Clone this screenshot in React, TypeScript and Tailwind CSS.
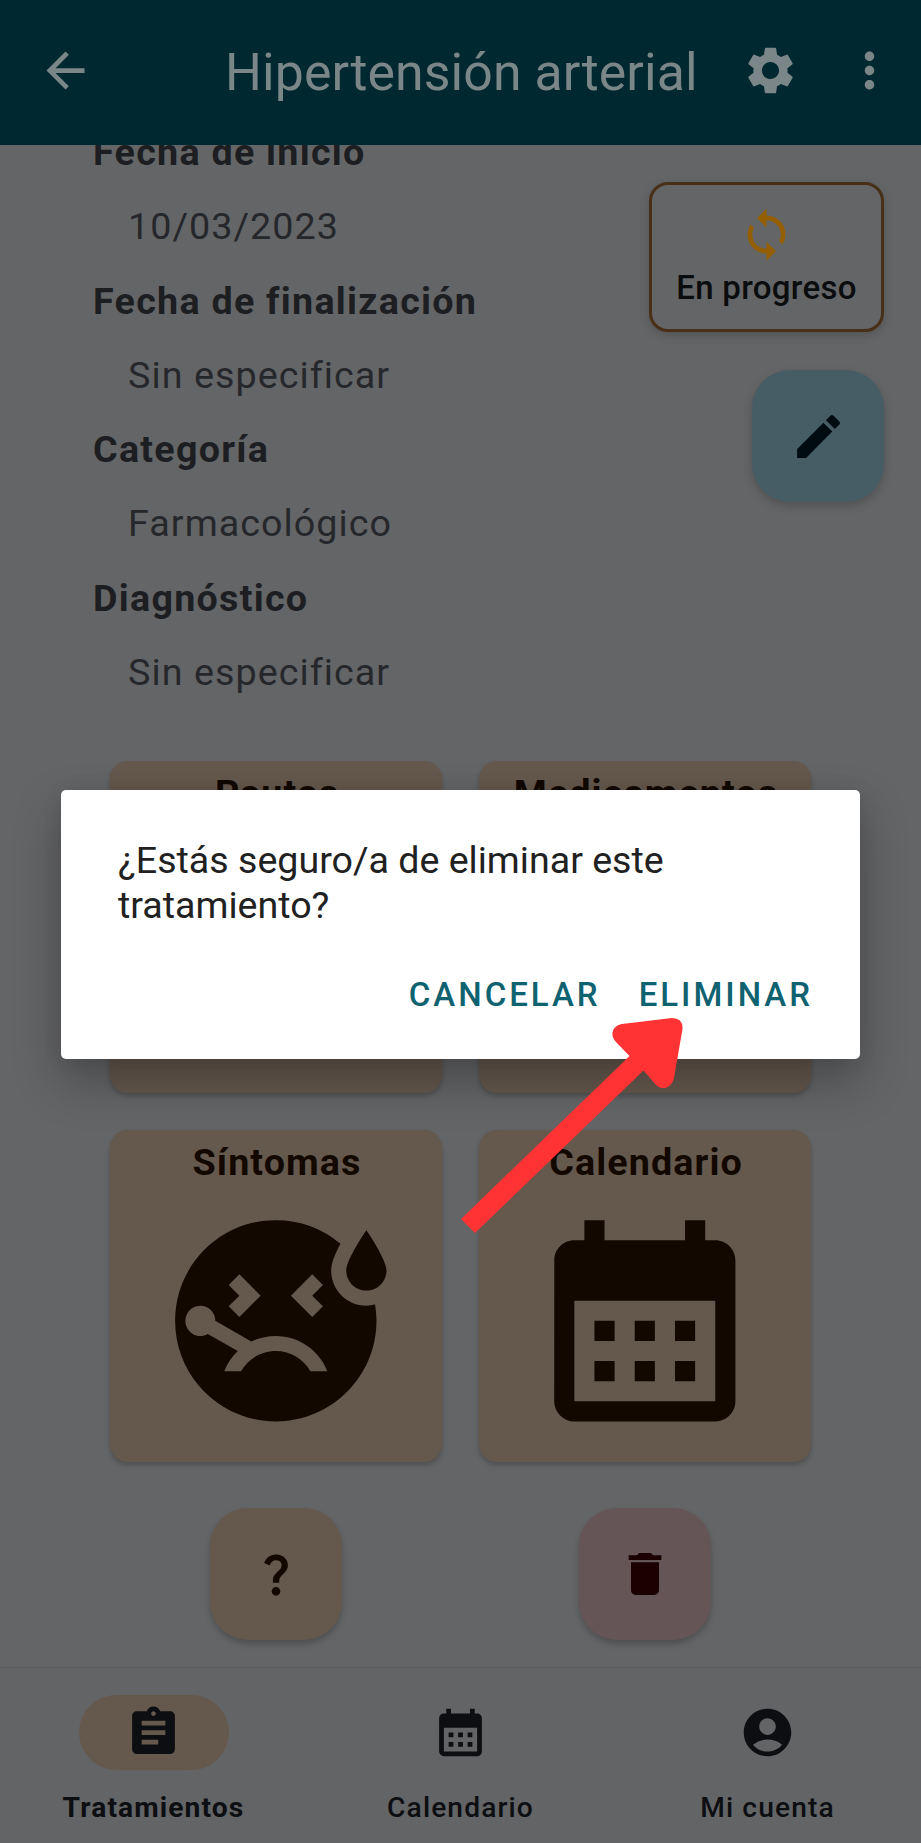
import type { ReactNode } from "react";
import {
  MdAccountCircle,
  MdArrowBack,
  MdAssignment,
  MdCalendarMonth,
  MdDelete,
  MdEdit,
  MdLoop,
  MdMoreVert,
  MdQuestionMark,
  MdSettings,
  MdSick,
} from "react-icons/md";

const details = [
  { label: "Fecha de inicio", value: "10/03/2023" },
  { label: "Fecha de finalización", value: "Sin especificar" },
  { label: "Categoría", value: "Farmacológico" },
  { label: "Diagnóstico", value: "Sin especificar" },
];

function Header() {
  return (
    <header className="flex h-[145px] shrink-0 items-center bg-[#002830] pb-1 text-[#7b8688]">
      <MdArrowBack className="ml-[37px] size-[57px]" />
      <h1 className="mt-[4px] ml-[131px] w-[478px] text-[51.8px] leading-none tracking-[0.1px] whitespace-nowrap">Hipertensión arterial</h1>
      <MdSettings className="ml-[39px] size-[57px]" />
      <MdMoreVert className="ml-[42px] size-[57px]" />
    </header>
  );
}

function Card({ title, children }: { title: string; children?: ReactNode }) {
  return (
    <article className="flex h-[332px] flex-col items-center rounded-[18px] bg-[#65584d] text-[#120800] shadow-[0_3px_5px_rgba(0,0,0,0.22)]">
      <h2 className="mt-[10px] pl-[2px] text-[37.7px] leading-[45px] font-bold tracking-[1.1px]">{title}</h2>
      <div className="mt-[15px]">{children}</div>
    </article>
  );
}

function NavItem({ label, active, children }: { label: string; active?: boolean; children: ReactNode }) {
  return (
    <div className={`flex flex-col items-center text-[#0d0e11] ${active ? "font-bold" : "font-medium"}`}>
      <div className={`mt-[27px] flex h-[75px] w-[150px] items-center justify-center rounded-full ${active ? "bg-[#65584d]" : ""}`}>
        {children}
      </div>
      <span className="mt-[21px] text-[28.2px] leading-[34px] tracking-[1.1px]">{label}</span>
    </div>
  );
}

function Dialog() {
  return (
    <div className="absolute top-[790px] left-[61px] flex h-[269px] w-[799px] flex-col rounded-[5px] bg-white shadow-[0_22px_48px_rgba(0,0,0,0.28),0_0_20px_rgba(0,0,0,0.08)]">
      <p className="mt-[48px] ml-[57px] w-[600px] text-[37.6px] leading-[44.5px] text-[#212121]">
        ¿Estás seguro/a de eliminar este tratamiento?
      </p>
      <div className="mt-[48px] mr-[47px] flex justify-end gap-[38px] text-[33px] leading-[40px] font-medium tracking-[3px] text-[#0f6270]">
        <button>CANCELAR</button>
        <button>ELIMINAR</button>
      </div>
    </div>
  );
}

export default function App() {
  return (
    <div className="relative flex h-[1843px] w-[921px] flex-col overflow-hidden bg-[#646567] font-[Roboto,sans-serif]">
      <Header />
      <main className="h-[1522px] overflow-hidden">
        <section className="-mt-[30px] flex h-[646px] justify-between">
          <dl className="ml-[93px] text-[37.7px] leading-[74.3px] text-[#1d1e22]">
            {details.map((item) => (
              <div key={item.label}>
                <dt className="font-bold tracking-[1.25px]">{item.label}</dt>
                <dd className="ml-[35px] tracking-[1.05px] text-[#26272b]">{item.value}</dd>
              </div>
            ))}
          </dl>
          <div className="mt-[67px] mr-[37px] flex flex-col items-end">
            <div className="flex h-[150px] w-[235px] flex-col items-center rounded-[19px] border-3 border-[#483016] bg-[#646567] text-[#0b0c0e] shadow-[0_3px_10px_rgba(0,0,0,0.18)]">
              <MdLoop className="mt-[21px] size-[57px] text-[#945f00]" />
              <span className="mt-[6px] text-[33px] leading-[38px] font-medium tracking-[0.3px]">En progreso</span>
            </div>
            <button className="mt-[38px] flex size-[132px] items-center justify-center rounded-[38px] bg-[#475d66] text-[#000c12] shadow-[0_4px_10px_rgba(0,0,0,0.2)]">
              <MdEdit className="size-[57px]" />
            </button>
          </div>
        </section>
        <section className="mx-auto grid w-[701px] grid-cols-2 gap-x-[37px] gap-y-[37px]">
          <Card title="Pautas" />
          <Card title="Medicamentos" />
          <Card title="Síntomas">
            <MdSick className="size-[241.6px]" />
          </Card>
          <Card title="Calendario">
            <MdCalendarMonth className="size-[241.6px]" />
          </Card>
        </section>
        <section className="mx-auto mt-[46px] grid w-[738px] grid-cols-2 justify-items-center">
          <button className="flex size-[132px] items-center justify-center rounded-[38px] bg-[#65584d] text-[#120800] shadow-[0_4px_6px_rgba(0,0,0,0.22)]">
            <MdQuestionMark className="size-[52px]" />
          </button>
          <button className="flex size-[132px] items-center justify-center rounded-[38px] bg-[#665556] text-[#1a0001] shadow-[0_4px_6px_rgba(0,0,0,0.22)]">
            <MdDelete className="size-[56px]" />
          </button>
        </section>
      </main>
      <nav className="grid h-[176px] shrink-0 grid-cols-3 border-t border-[#5b5c5e] bg-[#636466]">
        <NavItem label="Tratamientos" active>
          <MdAssignment className="size-[57px]" />
        </NavItem>
        <NavItem label="Calendario">
          <MdCalendarMonth className="size-[57px]" />
        </NavItem>
        <NavItem label="Mi cuenta">
          <MdAccountCircle className="size-[57px]" />
        </NavItem>
      </nav>
      <Dialog />
      <svg className="absolute top-[1010px] left-[450px]" width="250" height="230" viewBox="450 1010 250 230" fill="#ff3333">
        <path d="M461 1219L629.5 1056L616 1042C609 1035 613 1025 622 1024L672 1018Q683 1018 682.5 1029L674 1078C672 1088 662 1091 656 1085L643.500 1070.500L475 1233Z" />
      </svg>
    </div>
  );
}
